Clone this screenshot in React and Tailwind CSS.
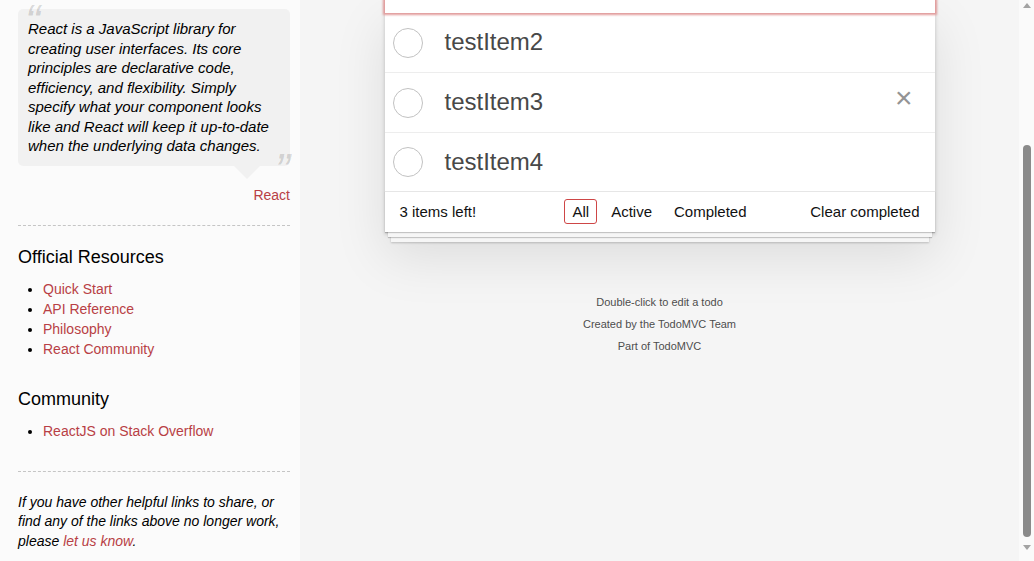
import React from "react";

const FONT = "font-['Liberation_Sans',Arial,Helvetica,sans-serif]";

const items = [
  { id: 2, title: "testItem2" },
  { id: 3, title: "testItem3", hover: true },
  { id: 4, title: "testItem4" },
];

function Sidebar() {
  return (
    <aside className="w-[300px] shrink-0 bg-[#fbfbfb] pl-[18px] pr-[10px] pt-[9px] text-[14px] text-black">
      {/* Quote bubble */}
      <div className="relative mb-[59px]">
        <div className="relative rounded-[5px] bg-black/[0.04] p-[10px]">
          <span className="absolute -top-[11px] left-[7px] text-[46px] leading-[46px] italic text-black/15 select-none">
            “
          </span>
          <p className="text-[15px] italic leading-[19.5px]">
            React is a JavaScript library for creating user interfaces. Its
            core principles are declarative code, efficiency, and flexibility.
            Simply specify what your component looks like and React will keep
            it up-to-date when the underlying data changes.
          </p>
          <span className="absolute -bottom-[27px] right-[0px] text-[46px] leading-[46px] italic text-black/15 select-none">
            ”
          </span>
          <span className="absolute top-full right-[30px] border-[13px] border-transparent border-t-black/[0.04]" />
        </div>
        <div className="absolute -bottom-[39px] right-0 leading-[20px]">
          <a className="text-[#b83f45]">React</a>
        </div>
      </div>

      <hr className="border-0 border-t border-dashed border-t-[#c5c5c5]" />

      <h3 className="mt-[21px] mb-[11px] text-[18px] leading-[21.6px] font-medium">
        Official Resources
      </h3>
      <ul className="ml-[25px] mb-[30px] list-disc leading-[20px]">
        <li><a className="text-[#b83f45]">Quick Start</a></li>
        <li><a className="text-[#b83f45]">API Reference</a></li>
        <li><a className="text-[#b83f45]">Philosophy</a></li>
        <li><a className="text-[#b83f45]">React Community</a></li>
      </ul>

      <h3 className="mb-[10px] text-[18px] leading-[21.6px] font-medium">
        Community
      </h3>
      <ul className="ml-[25px] mb-[30px] list-disc leading-[20px]">
        <li><a className="text-[#b83f45]">ReactJS on Stack Overflow</a></li>
      </ul>

      <hr className="border-0 border-t border-dashed border-t-[#c5c5c5]" />

      <p className="mt-[21px] text-[14px] italic leading-[19.7px]">
        If you have other helpful links to share, or find any of the links
        above no longer work, please{" "}
        <a className="text-[#b83f45]">let us know</a>.
      </p>
    </aside>
  );
}

function TodoRow({ item, last }) {
  return (
    <li
      className={`relative flex items-center ${
        last ? "h-[58px]" : "h-[60px] border-b border-[#ededed]"
      }`}
    >
      <span className="absolute left-[8px] top-1/2 -translate-y-1/2 w-[30px] h-[30px] rounded-full border border-[#c2c2c2]" />
      <label className="pl-[60px] pr-[15px] text-[24px] leading-[28.8px] text-[#484848]">
        {item.title}
      </label>
      {item.hover && (
        <span className="absolute right-[22px] top-[5px] text-[30px] leading-[40px] text-[#949494]">
          ×
        </span>
      )}
    </li>
  );
}

function TodoApp() {
  return (
    <section className="w-[550px] bg-white shadow-[0_2px_4px_0_rgba(0,0,0,0.2),0_25px_50px_0_rgba(0,0,0,0.1)]">
      {/* bottom edge of the focused input, scrolled mostly out of view */}
      <div className="h-[60px] -mt-[47px] bg-white shadow-[0_0_2px_2px_#e29c9c]" />
      <ul>
        {items.map((it, i) => (
          <TodoRow key={it.id} item={it} last={i === items.length - 1} />
        ))}
      </ul>
      <footer className="relative h-[41px] border-t border-[#e6e6e6] px-[15px] text-[15px] text-[#111] flex items-center justify-between shadow-[0_1px_1px_rgba(0,0,0,0.2),0_8px_0_-3px_#f6f6f6,0_9px_1px_-3px_rgba(0,0,0,0.2),0_16px_0_-6px_#f6f6f6,0_17px_2px_-6px_rgba(0,0,0,0.2)]">
        <span>3 items left!</span>
        <ul className="absolute inset-x-0 top-0 bottom-0 flex items-center justify-center">
          <li>
            <a className="mx-[3px] px-[7px] py-[3px] border border-[#ce4646] rounded-[3px]">
              All
            </a>
          </li>
          <li>
            <a className="mx-[3px] px-[7px] py-[3px] border border-transparent">
              Active
            </a>
          </li>
          <li>
            <a className="mx-[3px] px-[7px] py-[3px] border border-transparent">
              Completed
            </a>
          </li>
        </ul>
        <span className="relative">Clear completed</span>
      </footer>
    </section>
  );
}

function Scrollbar() {
  return (
    <div className="w-[15px] shrink-0 bg-[#fafafa] flex flex-col items-center">
      <span className="mt-[3px] w-0 h-0 border-x-[4px] border-x-transparent border-b-[5px] border-b-[#a3a3a3]" />
      <span className="mt-[137px] w-[8px] h-[392px] rounded-full bg-[#8a8a8a]" />
      <span className="mt-[8px] w-0 h-0 border-x-[4px] border-x-transparent border-t-[5px] border-t-[#a3a3a3]" />
    </div>
  );
}

export default function App() {
  return (
    <div className={`${FONT} flex w-[1034px] h-[561px] overflow-hidden bg-[#f5f5f5]`}>
      <Sidebar />
      <main className="flex-1 flex flex-col items-center">
        <TodoApp />
        <div className="mt-[65px] text-center text-[11px] text-[#4d4d4d] leading-[11px] [text-shadow:0_1px_0_rgba(255,255,255,0.5)]">
          <p className="mb-[11px]">Double-click to edit a todo</p>
          <p className="mb-[11px]">
            Created by <a>the TodoMVC Team</a>
          </p>
          <p>
            Part of <a>TodoMVC</a>
          </p>
        </div>
      </main>
      <Scrollbar />
    </div>
  );
}
